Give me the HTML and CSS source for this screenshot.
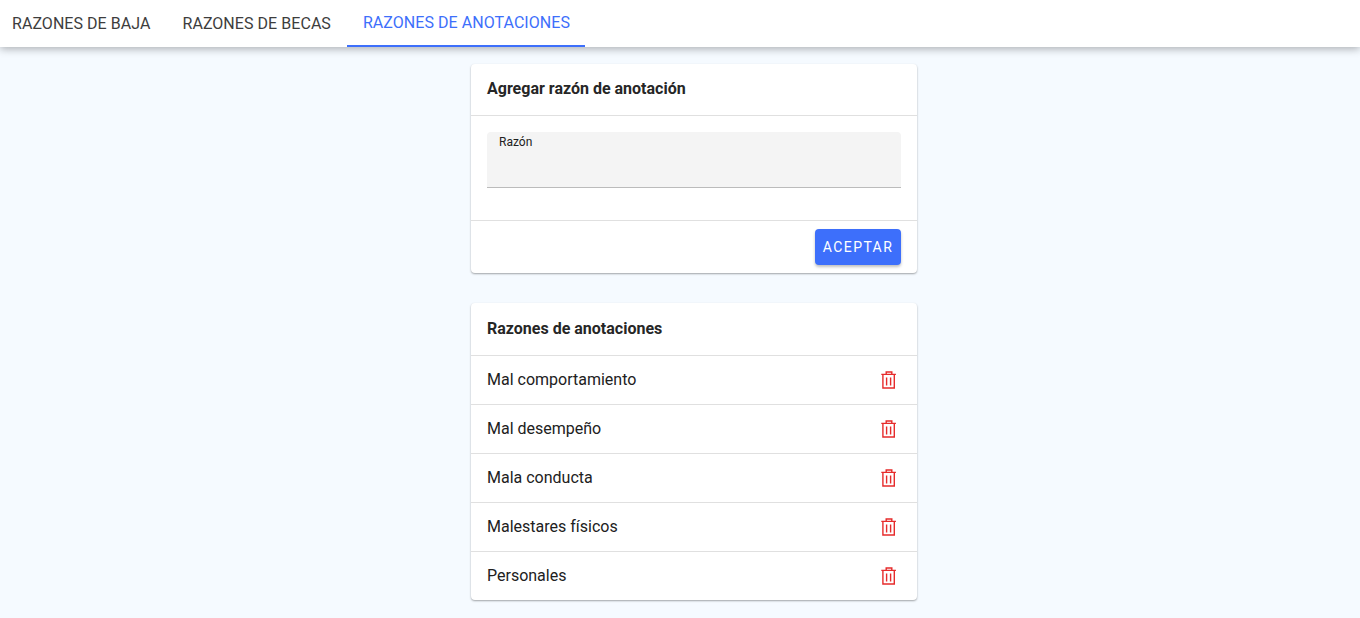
FILE: index.html
```html
<!DOCTYPE html>
<html lang="es">
<head>
<meta charset="utf-8">
<title>Razones</title>
<link rel="stylesheet" href="styles.css">
</head>
<body>
<nav class="tabs">
  <a class="tab">RAZONES DE BAJA</a>
  <a class="tab">RAZONES DE BECAS</a>
  <a class="tab active">RAZONES DE ANOTACIONES</a>
</nav>
<main class="content">
  <section class="card">
    <h2 class="card-title">Agregar razón de anotación</h2>
    <div class="card-body">
      <div class="field"><label class="field-label">Razón</label></div>
    </div>
    <div class="card-actions"><button class="btn">ACEPTAR</button></div>
  </section>
  <section class="card">
    <h2 class="card-title card-title-list">Razones de anotaciones</h2>
    <ul class="list">
      <li class="row"><span class="row-text">Mal comportamiento</span><svg class="trash" viewBox="0 0 16 18"><path d="M5.2 3V1h5.6v2M.3 3.4h14.6M1.9 3.6v13.4h11.4V3.6M5.6 6.5v8M9.6 6.5v8"/></svg></li>
      <li class="row"><span class="row-text">Mal desempeño</span><svg class="trash" viewBox="0 0 16 18"><path d="M5.2 3V1h5.6v2M.3 3.4h14.6M1.9 3.6v13.4h11.4V3.6M5.6 6.5v8M9.6 6.5v8"/></svg></li>
      <li class="row"><span class="row-text">Mala conducta</span><svg class="trash" viewBox="0 0 16 18"><path d="M5.2 3V1h5.6v2M.3 3.4h14.6M1.9 3.6v13.4h11.4V3.6M5.6 6.5v8M9.6 6.5v8"/></svg></li>
      <li class="row"><span class="row-text">Malestares físicos</span><svg class="trash" viewBox="0 0 16 18"><path d="M5.2 3V1h5.6v2M.3 3.4h14.6M1.9 3.6v13.4h11.4V3.6M5.6 6.5v8M9.6 6.5v8"/></svg></li>
      <li class="row"><span class="row-text">Personales</span><svg class="trash" viewBox="0 0 16 18"><path d="M5.2 3V1h5.6v2M.3 3.4h14.6M1.9 3.6v13.4h11.4V3.6M5.6 6.5v8M9.6 6.5v8"/></svg></li>
    </ul>
  </section>
</main>
</body>
</html>
```
FILE: styles.css
```css
* { box-sizing: border-box; }
html, body { height: 100%; }
body {
  margin: 0;
  background: #f5faff;
  font-family: Roboto, sans-serif;
  color: #212121;
  overflow: hidden;
}
.tabs {
  display: flex;
  height: 47px;
  background: #fff;
  box-shadow: 0 2px 8px rgba(0,0,0,.3);
}
.tab {
  display: flex;
  align-items: center;
  height: 47px;
  padding: 0 16px;
  font-size: 16px;
  font-weight: 400;
  letter-spacing: .05px;
  color: #3d3d3d;
}
.tab:first-child { padding-left: 12px; }
.active { color: #3d6ffb; padding: 0 15px 0 16px; border-bottom: 2px solid #3d6ffb; }
.content {
  display: flex;
  flex-direction: column;
  align-items: center;
  gap: 30px;
  padding: 17px 0 0 28px;
}
.card {
  width: 446px;
  background: #fff;
  border-radius: 4px;
  box-shadow: 0 1px 2px rgba(0,0,0,.35);
}
.card-title {
  margin: 0;
  height: 52px;
  padding: 0 16px 2px;
  display: flex;
  align-items: center;
  font-size: 16px;
  font-weight: 700;
  color: #262626;
  border-bottom: 1px solid #e0e0e0;
}
.card-title-list { height: 53px; }
.card-body { padding: 16px 16px 32px; border-bottom: 1px solid #e0e0e0; }
.field {
  height: 56px;
  background: #f4f4f4;
  border-bottom: 1px solid #bbb;
  border-radius: 4px 4px 0 0;
  padding: 4px 12px;
}
.field-label { display: block; font-size: 12px; line-height: 13px; }
.card-actions { display: flex; justify-content: flex-end; padding: 8px 16px; }
.btn {
  width: 86px;
  height: 36px;
  border: 0;
  border-radius: 4px;
  background: #3d6ffb;
  color: #fff;
  font: 400 14px Roboto, sans-serif;
  letter-spacing: 1.4px;
  box-shadow: 0 2px 3px rgba(0,0,0,.25);
}
.list { list-style: none; margin: 0; padding: 0; }
.row {
  display: flex;
  align-items: center;
  justify-content: space-between;
  height: 49px;
  padding: 0 20px 0 16px;
  font-size: 16px;
  border-bottom: 1px solid #e0e0e0;
}
.row:last-child { height: 48px; border-bottom: 0; }
.row-text { padding-bottom: 2px; }
.trash { width: 16px; height: 18px; fill: none; stroke: #e62b2b; stroke-width: 1.4; }
```
